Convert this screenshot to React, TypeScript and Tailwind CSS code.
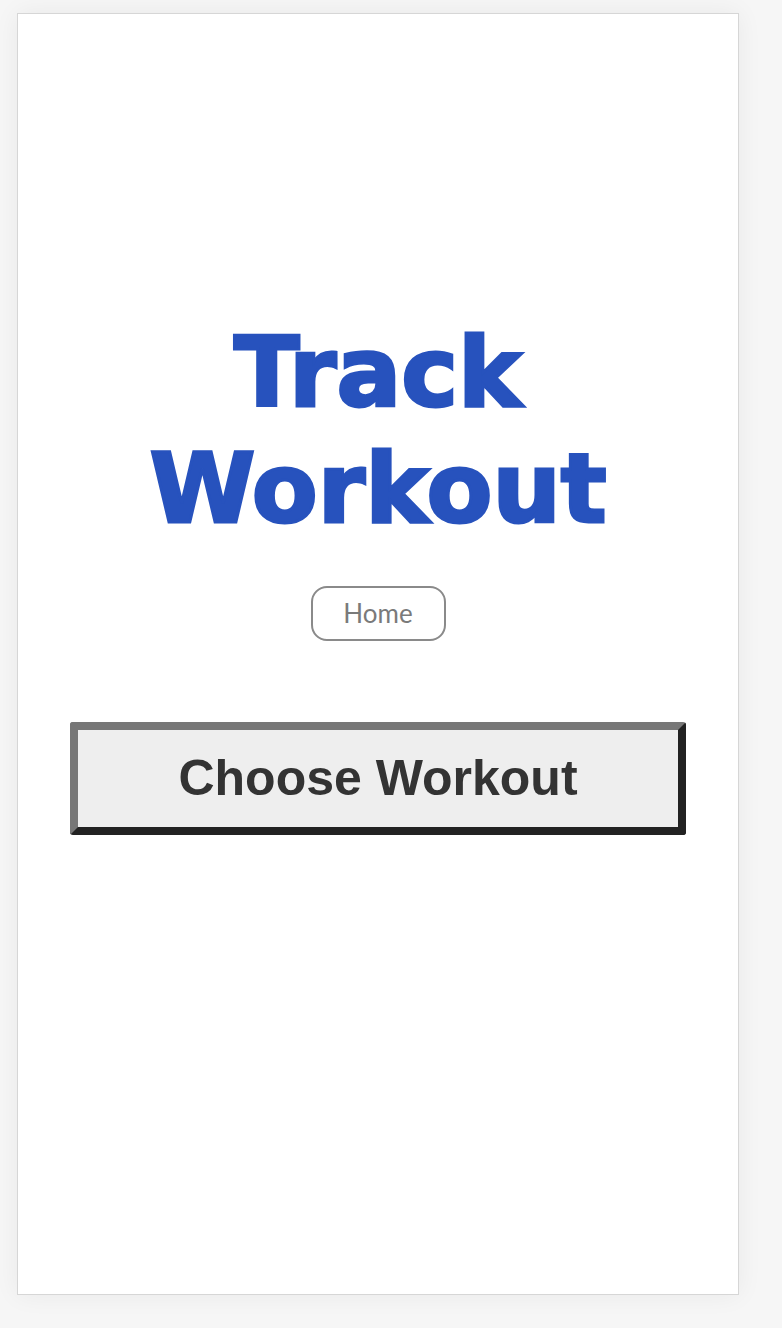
import React from 'react';

export default function App() {
  return (
    <div className="min-h-[1328px] w-full bg-[#f6f6f6] pt-[13px] pl-[17px]">
      <div className="w-[722px] h-[1282px] bg-white border border-[#d6d6d6] shadow-[0_0_24px_rgba(0,0,0,0.06)] flex flex-col items-center pt-[301px]">
        {/* Title */}
        <h1 className="text-center text-[#2752bd] font-bold text-[96px] leading-[116px] [-webkit-text-stroke:3px_#2752bd] font-['DejaVu_Sans','Open_Sans',sans-serif]">
          Track
          <br />
          Workout
        </h1>

        <button className="mt-[39px] w-[135px] h-[55px] rounded-[16px] border-2 border-[#8a8a8a] text-[#7a7a7a] text-[26px] font-['Lato','Noto_Sans',sans-serif] flex items-center justify-center bg-white">
          Home
        </button>

        <button className="mt-[81px] w-[616px] h-[113px] rounded-[3px] border-[8px] border-t-[#777777] border-l-[#777777] border-r-[#222222] border-b-[#222222] bg-[#eeeeee] text-[#333333] text-[50px] font-bold font-['Liberation_Sans',Arial,sans-serif] flex items-center justify-center">
          Choose Workout
        </button>
      </div>
    </div>
  );
}
